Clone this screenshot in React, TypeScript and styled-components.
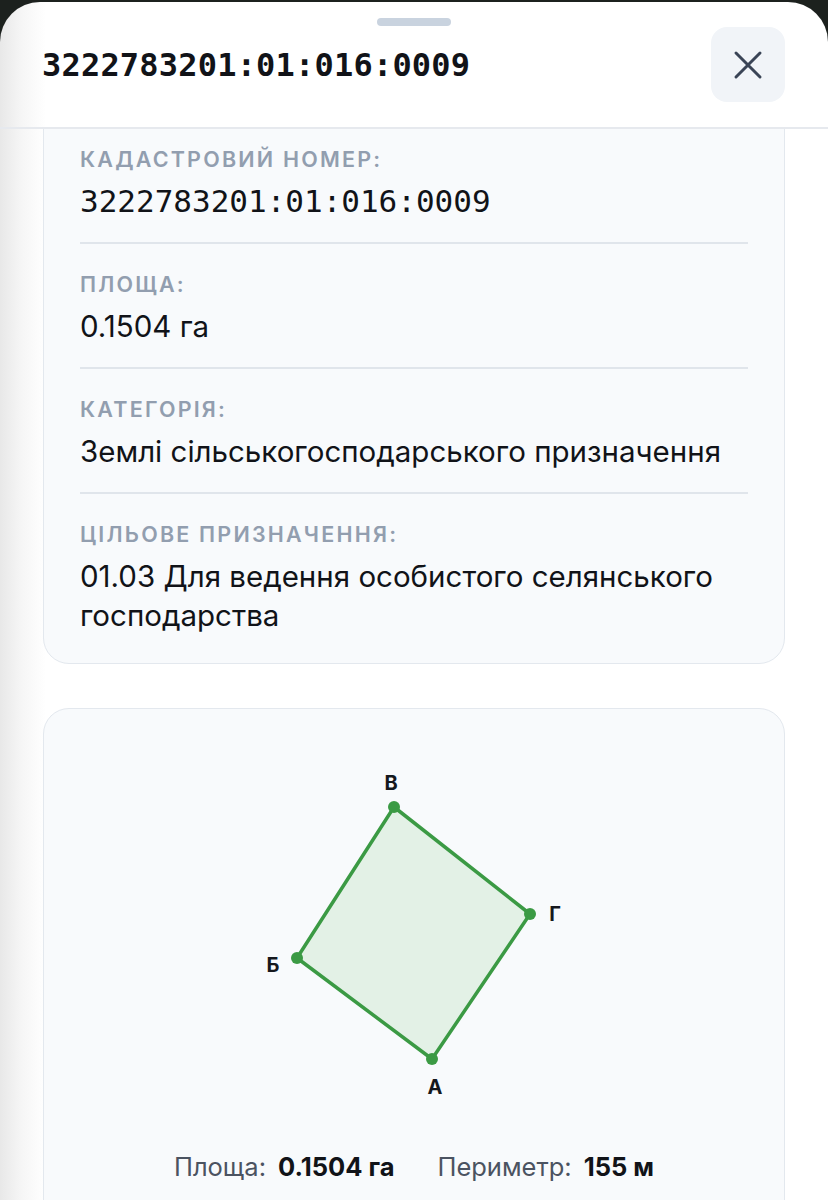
import React from "react";
import styled, { createGlobalStyle } from "styled-components";

const GlobalStyle = createGlobalStyle`
  html, body {
    margin: 0;
    padding: 0;
    background: #1c211e;
  }
  body {
    font-family: "Inter", "Noto Sans", sans-serif;
    -webkit-font-smoothing: antialiased;
  }
  * { box-sizing: border-box; }
`;

const MONO = `"DejaVu Sans Mono", "Liberation Mono", monospace`;

const Sheet = styled.div`
  margin-top: 2px;
  height: 1198px;
  display: flex;
  flex-direction: column;
  border-radius: 40px 40px 0 0;
  overflow: hidden;
  background: linear-gradient(90deg, #e8e8e8 0px, #f6f6f6 22px, #ffffff 46px);
`;

const Header = styled.header`
  display: flex;
  flex-direction: column;
  padding: 16px 43px 25px 42px;
  border-bottom: 2px solid #e6e9ee;
`;

const Handle = styled.div`
  align-self: center;
  width: 74px;
  height: 8px;
  border-radius: 4px;
  background: #c9d3df;
`;

const TitleRow = styled.div`
  margin-top: 1px;
  display: flex;
  align-items: center;
  justify-content: space-between;
  height: 75px;
`;

const Title = styled.h1`
  margin: 0;
  font-family: ${MONO};
  font-weight: 700;
  font-size: 32px;
  color: #111318;
  letter-spacing: 0.2px;
`;

const CloseButton = styled.button`
  width: 74px;
  height: 75px;
  border: none;
  border-radius: 16px;
  background: #f1f4f8;
  display: flex;
  align-items: center;
  justify-content: center;
  padding: 0;
  cursor: pointer;
`;

const Body = styled.div`
  flex: 1;
  overflow: hidden;
`;

const ScrollContent = styled.div<{ $offset: number }>`
  margin-top: ${(p) => -p.$offset}px;
  padding: 0 43px;
  display: flex;
  flex-direction: column;
  gap: 44px;
`;

const Card = styled.section`
  background: #f8fafc;
  border: 1.5px solid #e3e8ee;
  border-radius: 26px;
`;

const InfoCard = styled(Card)`
  padding: 20px 36px 7px;
`;

const Row = styled.div`
  display: flex;
  flex-direction: column;
  gap: 7px;
  padding: 24px 0 21px;
  & + & {
    border-top: 2px solid #e0e5eb;
  }
`;

const Label = styled.div`
  font-size: 21.5px;
  line-height: 32px;
  font-weight: 600;
  letter-spacing: 2.2px;
  text-transform: uppercase;
  color: #929eaf;
`;

const Value = styled.div<{ $mono?: boolean }>`
  font-family: ${(p) => (p.$mono ? MONO : `"Inter", "Noto Sans", sans-serif`)};
  font-size: ${(p) => (p.$mono ? "31px" : "29.5px")};
  line-height: 39px;
  font-weight: 400;
  color: #111318;
`;

const ShapeCard = styled(Card)`
  padding: 42px 0 60px;
  display: flex;
  flex-direction: column;
  align-items: center;
`;

const Stats = styled.div`
  margin-top: 30px;
  display: flex;
  align-items: baseline;
  gap: 43px;
  font-size: 25.5px;
  line-height: 32px;
`;

const Stat = styled.div`
  display: flex;
  align-items: baseline;
  gap: 12px;
`;

const StatLabel = styled.span`
  color: #4b5361;
  font-weight: 400;
`;

const StatValue = styled.span`
  color: #111318;
  font-weight: 700;
`;

const CornerText = styled.text`
  font-family: "Inter", "Noto Sans", sans-serif;
  font-size: 20px;
  font-weight: 700;
  fill: #15181d;
`;

type Corner = { name: string; x: number; y: number; lx: number; ly: number };

const corners: Corner[] = [
  { name: "В", x: 160, y: 56, lx: 157, ly: 32 },
  { name: "Г", x: 296, y: 163, lx: 321, ly: 163 },
  { name: "А", x: 198, y: 308, lx: 201, ly: 336 },
  { name: "Б", x: 63, y: 207, lx: 39, ly: 214 },
];

const rows = [
  { label: "Кадастровий номер:", value: "3222783201:01:016:0009", mono: true },
  { label: "Площа:", value: "0.1504 га" },
  { label: "Категорія:", value: "Землі сільськогосподарського призначення" },
  {
    label: "Цільове призначення:",
    value: "01.03 Для ведення особистого селянського господарства",
  },
];

function CloseIcon() {
  return (
    <svg width="30" height="30" viewBox="0 0 30 30" fill="none">
      <path
        d="M3 3 L27 27 M27 3 L3 27"
        stroke="#3a4456"
        strokeWidth="3"
        strokeLinecap="round"
      />
    </svg>
  );
}

function ParcelShape() {
  const points = corners.map((c) => `${c.x},${c.y}`).join(" ");
  return (
    <svg width="360" height="370" viewBox="0 0 360 370">
      <polygon
        points={points}
        fill="#e3f1e6"
        stroke="#3b9a44"
        strokeWidth="3.5"
        strokeLinejoin="round"
      />
      {corners.map((c) => (
        <circle key={`p-${c.name}`} cx={c.x} cy={c.y} r="6" fill="#3b9a44" />
      ))}
      {corners.map((c) => (
        <CornerText
          key={`t-${c.name}`}
          x={c.lx}
          y={c.ly}
          textAnchor="middle"
          dominantBaseline="central"
        >
          {c.name}
        </CornerText>
      ))}
    </svg>
  );
}

export default function App() {
  return (
    <>
      <GlobalStyle />
      <Sheet>
        <Header>
          <Handle />
          <TitleRow>
            <Title>3222783201:01:016:0009</Title>
            <CloseButton aria-label="Закрити">
              <CloseIcon />
            </CloseButton>
          </TitleRow>
        </Header>
        <Body>
          <ScrollContent $offset={31}>
            <InfoCard>
              {rows.map((r) => (
                <Row key={r.label}>
                  <Label>{r.label}</Label>
                  <Value $mono={r.mono}>{r.value}</Value>
                </Row>
              ))}
            </InfoCard>
            <ShapeCard>
              <ParcelShape />
              <Stats>
                <Stat>
                  <StatLabel>Площа:</StatLabel>
                  <StatValue>0.1504 га</StatValue>
                </Stat>
                <Stat>
                  <StatLabel>Периметр:</StatLabel>
                  <StatValue>155 м</StatValue>
                </Stat>
              </Stats>
            </ShapeCard>
          </ScrollContent>
        </Body>
      </Sheet>
    </>
  );
}
